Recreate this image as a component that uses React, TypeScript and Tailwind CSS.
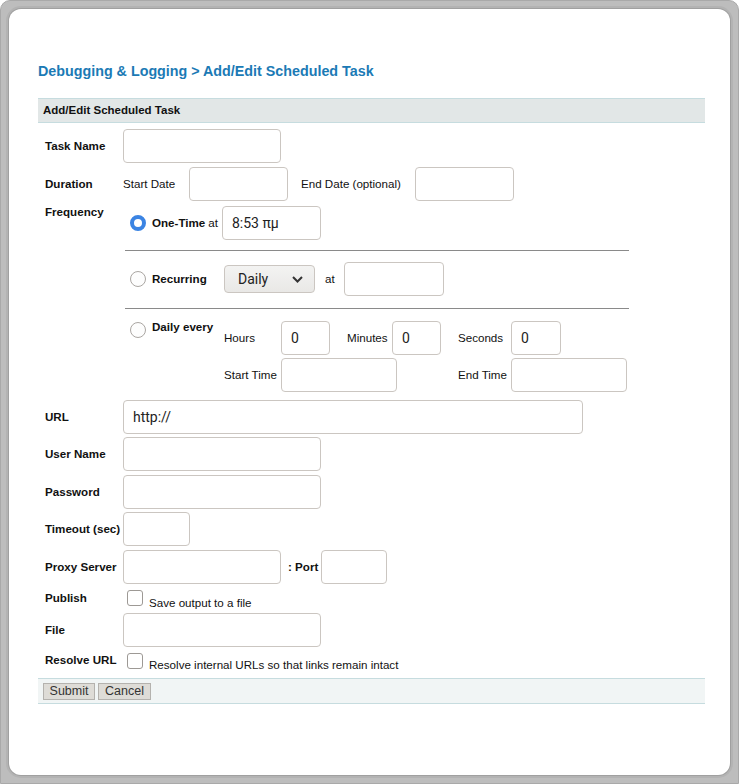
import React from "react";

const labelFont = { fontFamily: '"Liberation Sans", Arial, sans-serif' };

function Field({ w, value, h = "h-[34px]" }: { w: string; value?: string; h?: string }) {
  return (
    <input
      defaultValue={value}
      className={`${w} ${h} shrink-0 rounded-[4px] border border-[#cbc6c1] bg-white pl-[9px] text-[14px] text-[#222] outline-none font-['Roboto',sans-serif]`}
    />
  );
}

function Radio({ checked }: { checked?: boolean }) {
  return checked ? (
    <span className="block w-4 h-4 shrink-0 rounded-full border-[4px] border-[#3b84e3] bg-white" />
  ) : (
    <span className="block w-4 h-4 shrink-0 rounded-full border border-[#aaa6a2] bg-[#fdfdfd]" />
  );
}

function Check() {
  return <span className="block w-4 h-4 shrink-0 rounded-[3px] border border-[#9d9995] bg-white" />;
}

function Label({ children, className = "" }: { children: React.ReactNode; className?: string }) {
  return (
    <div className={`w-[85px] shrink-0 pl-[7px] text-[11.6px] font-bold text-[#111] leading-[12px] ${className}`}>
      {children}
    </div>
  );
}

export default function App() {
  return (
    <div
      style={labelFont}
      className="h-[784px] w-[739px] overflow-hidden rounded-t-[10px] border border-[#a9a9a9] bg-[#bdbdbd] p-[8px] text-[#111]"
    >
      <div className="h-full rounded-[12px] bg-white px-[29px] pt-[54px] shadow-[0_0_0_1px_#a0a0a0,0_0_0_3px_#b3b3b3]">
        <h1 className="h-4 text-[14.3px] font-bold leading-4 text-[#1b7ab5]">
          Debugging &amp; Logging &gt; Add/Edit Scheduled Task
        </h1>

        <div className="mt-[19px] mr-[-4px] h-[25px] border-y border-[#c6dcdf] bg-[#e2e7e7] pl-[5px] text-[11.5px] font-bold leading-[23px] text-[#111]">
          Add/Edit Scheduled Task
        </div>

        {/* task name */}
        <div className="mt-[6px] flex items-center">
          <Label>Task Name</Label>
          <Field w="w-[158px]" />
        </div>

        {/* duration */}
        <div className="mt-[4px] flex items-center text-[11.6px]">
          <Label>Duration</Label>
          <span className="w-[66px]">Start Date</span>
          <Field w="w-[99px]" />
          <span className="ml-[13px] w-[114px]">End Date (optional)</span>
          <Field w="w-[99px]" />
        </div>

        {/* frequency */}
        <div className="mt-[5px] flex items-start text-[11.6px]">
          <Label>Frequency</Label>
          <div className="w-[506px]">
            <div className="flex items-center">
              <span className="ml-[7px]">
                <Radio checked />
              </span>
              <span className="ml-[6px] font-bold">One-Time</span>
              <span className="ml-[3px]">at</span>
              <span className="ml-[4px]">
                <Field w="w-[99px]" value="8:53 πμ" />
              </span>
            </div>
            <div className="mt-[10px] ml-[2px] h-px w-[504px] bg-[#8a8a8a]" />

            <div className="mt-[11px] flex items-center">
              <div className="flex w-[101px] items-center">
                <span className="ml-[7px]">
                  <Radio />
                </span>
                <span className="ml-[6px] font-bold">Recurring</span>
              </div>
              <div className="flex h-[28px] w-[91px] items-center justify-between rounded-[4px] border border-[#cbc6c1] bg-gradient-to-b from-[#f3f3f2] to-[#e9e8e6] pl-[13px] pr-[11px] text-[14px] text-[#222] font-['Roboto',sans-serif]">
                Daily
                <svg width="11" height="7" viewBox="0 0 11 7" fill="none">
                  <path d="M1 1L5.5 5.5L10 1" stroke="#333" strokeWidth="2" />
                </svg>
              </div>
              <span className="ml-[10px] w-[19px]">at</span>
              <Field w="w-[100px]" />
            </div>
            <div className="mt-[12px] ml-[2px] h-px w-[504px] bg-[#8a8a8a]" />

            <div className="mt-[12px] flex items-start">
              <div className="flex w-[101px] items-start">
                <span className="ml-[7px] mt-px">
                  <Radio />
                </span>
                <span className="ml-[6px] font-bold leading-[12px]">Daily every</span>
              </div>
              <div>
                <div className="flex items-center">
                  <span className="w-[57px]">Hours</span>
                  <Field w="w-[49px]" value="0" />
                  <span className="ml-[17px] w-[45px]">Minutes</span>
                  <Field w="w-[49px]" value="0" />
                  <span className="ml-[17px] w-[53px]">Seconds</span>
                  <Field w="w-[50px]" value="0" />
                </div>
                <div className="mt-[3px] flex items-center">
                  <span className="w-[57px]">Start Time</span>
                  <Field w="w-[116px]" />
                  <span className="ml-[61px] w-[53px]">End Time</span>
                  <Field w="w-[116px]" />
                </div>
              </div>
            </div>
          </div>
        </div>

        {/* url */}
        <div className="mt-[8px] flex items-center">
          <Label>URL</Label>
          <Field w="w-[460px]" value="http://" />
        </div>
        <div className="mt-[3px] flex items-center">
          <Label>User Name</Label>
          <Field w="w-[198px]" />
        </div>
        <div className="mt-[4px] flex items-center">
          <Label>Password</Label>
          <Field w="w-[198px]" />
        </div>
        <div className="mt-[3px] flex items-center">
          <Label>Timeout (sec)</Label>
          <Field w="w-[67px]" />
        </div>
        <div className="mt-[4px] flex items-center">
          <Label>Proxy Server</Label>
          <Field w="w-[158px]" />
          <span className="ml-[7px] w-[33px] text-[11.6px] font-bold">: Port</span>
          <Field w="w-[66px]" />
        </div>

        {/* publish */}
        <div className="mt-[6px] flex items-start text-[11.6px]">
          <Label className="pt-[2px] pb-[1px]">Publish</Label>
          <span className="ml-[4px]">
            <Check />
          </span>
          <span className="ml-[6px] pt-[6px] leading-[13px]">Save output to a file</span>
        </div>
        <div className="mt-[4px] flex items-center">
          <Label>File</Label>
          <Field w="w-[198px]" />
        </div>
        <div className="mt-[6px] flex items-start text-[11.6px]">
          <Label className="pt-[1px]">Resolve URL</Label>
          <span className="ml-[4px]">
            <Check />
          </span>
          <span className="ml-[6px] pt-[5px] leading-[13px]">Resolve internal URLs so that links remain intact</span>
        </div>

        {/* footer */}
        <div className="mt-[7px] mr-[-4px] flex h-[26px] items-center gap-[3px] border-y border-[#c6dcdf] bg-[#f1f5f5] pl-[5px]">
          <button className="h-[17px] w-[52px] border border-[#b4b2ae] bg-[#dedcd7] text-[12.5px] leading-[15px] text-[#333]">
            Submit
          </button>
          <button className="h-[17px] w-[53px] border border-[#b4b2ae] bg-[#dedcd7] text-[12.5px] leading-[15px] text-[#333]">
            Cancel
          </button>
        </div>
      </div>
    </div>
  );
}
